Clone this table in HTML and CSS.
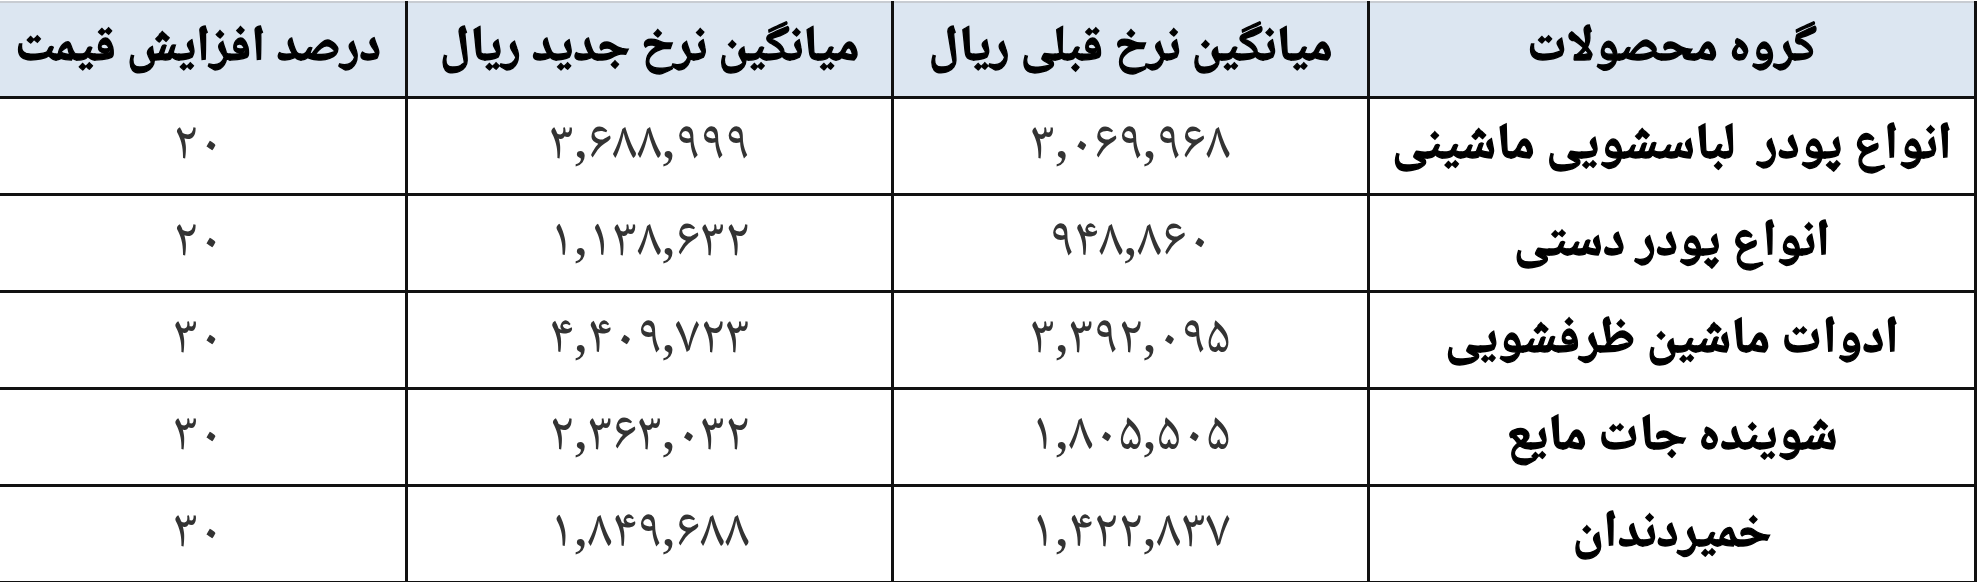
FILE: index.html
```html
<!DOCTYPE html>
<html lang="fa" dir="rtl">
<head>
<meta charset="utf-8">
<link rel="stylesheet" href="styles.css">
</head>
<body>
<table class="price-table">
  <thead>
    <tr>
      <th class="c1">گروه محصولات</th>
      <th class="c2">میانگین نرخ قبلی ریال</th>
      <th class="c3">میانگین نرخ جدید ریال</th>
      <th class="c4">درصد افزایش قیمت</th>
    </tr>
  </thead>
  <tbody>
    <tr>
      <td class="name">انواع پودر&nbsp; لباسشویی ماشینی</td>
      <td class="num">۳,۰۶۹,۹۶۸</td>
      <td class="num">۳,۶۸۸,۹۹۹</td>
      <td class="num">۲۰</td>
    </tr>
    <tr>
      <td class="name">انواع پودر دستی</td>
      <td class="num">۹۴۸,۸۶۰</td>
      <td class="num">۱,۱۳۸,۶۳۲</td>
      <td class="num">۲۰</td>
    </tr>
    <tr>
      <td class="name">ادوات ماشین ظرفشویی</td>
      <td class="num">۳,۳۹۲,۰۹۵</td>
      <td class="num">۴,۴۰۹,۷۲۳</td>
      <td class="num">۳۰</td>
    </tr>
    <tr>
      <td class="name">شوینده جات مایع</td>
      <td class="num">۱,۸۰۵,۵۰۵</td>
      <td class="num">۲,۳۶۳,۰۳۲</td>
      <td class="num">۳۰</td>
    </tr>
    <tr>
      <td class="name">خمیردندان</td>
      <td class="num">۱,۴۲۲,۸۳۷</td>
      <td class="num">۱,۸۴۹,۶۸۸</td>
      <td class="num">۳۰</td>
    </tr>
  </tbody>
</table>
</body>
</html>
```

FILE: styles.css
```css
html, body {
  margin: 0;
  padding: 0;
  background: #ffffff;
}

body {
  padding: 1px 3px 0 3px;
  font-family: "Noto Naskh Arabic", "Noto Sans Arabic", "DejaVu Sans", sans-serif;
}

.price-table {
  border-collapse: collapse;
  table-layout: fixed;
  width: 1974px;
  direction: rtl;
}

.price-table th,
.price-table td {
  border: 3px solid #111;
  text-align: center;
  vertical-align: middle;
  padding: 0;
  line-height: 1;
  white-space: nowrap;
  overflow: hidden;
}

.price-table th {
  height: 93px;
  background: #dce6f1;
  color: #000;
  font-weight: 700;
  font-size: 50px;
  -webkit-text-stroke: 1.3px #000;
  border-top: 2px solid #c8ccd2;
}

.price-table td {
  height: 94px;
}

.c1 { width: 604px; }
.c2 { width: 473px; }
.c3 { width: 483px; }
.c4 { width: 414px; }

.name {
  font-weight: 700;
  font-size: 51px;
  -webkit-text-stroke: 1.3px #000;
  color: #000;
}

.num {
  font-size: 55px;
  letter-spacing: 6px;
  color: #333;
}
```
